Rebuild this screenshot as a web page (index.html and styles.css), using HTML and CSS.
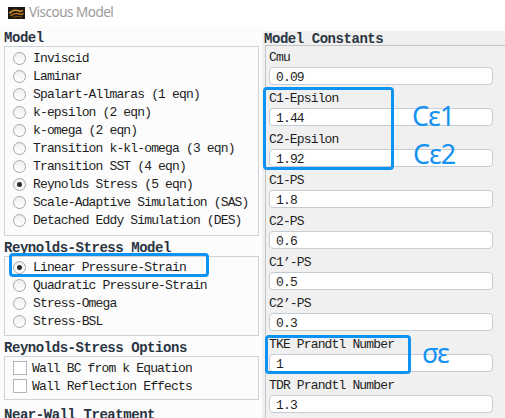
FILE: index.html
```html
<!DOCTYPE html>
<html>
<head>
<meta charset="utf-8" />
<title>Viscous Model</title>
<link rel="stylesheet" href="styles.css">
</head>
<body>

<div class="titlebar">
  <svg class="app-icon" width="17" height="12" viewBox="0 0 17 12">
    <rect width="17" height="12" fill="#1d1812"/>
    <path d="M1.5 6.5 C4 3, 8 2.5, 12 4.5 L15 3.5" stroke="#d4932a" stroke-width="1.6" fill="none"/>
    <path d="M2.5 9 C5 6.5, 9 6, 13 7.5 L15.5 6.5" stroke="#b8741c" stroke-width="1.4" fill="none"/>
    <path d="M5 10.5 C8 9, 11 9.5, 14 10" stroke="#8a5614" stroke-width="1" fill="none"/>
  </svg>
  <span class="title">Viscous Model</span>
</div>

<div class="main">
  <div class="left">
    <div class="heading">Model</div>
    <div class="group">
      <div class="opt"><span class="radio"></span>Inviscid</div>
      <div class="opt"><span class="radio"></span>Laminar</div>
      <div class="opt"><span class="radio"></span>Spalart-Allmaras (1 eqn)</div>
      <div class="opt"><span class="radio"></span>k-epsilon (2 eqn)</div>
      <div class="opt"><span class="radio"></span>k-omega (2 eqn)</div>
      <div class="opt"><span class="radio"></span>Transition k-kl-omega (3 eqn)</div>
      <div class="opt"><span class="radio"></span>Transition SST (4 eqn)</div>
      <div class="opt"><span class="radio on"></span>Reynolds Stress (5 eqn)</div>
      <div class="opt"><span class="radio"></span>Scale-Adaptive Simulation (SAS)</div>
      <div class="opt"><span class="radio"></span>Detached Eddy Simulation (DES)</div>
    </div>

    <div class="heading">Reynolds-Stress Model</div>
    <div class="group group-rs">
      <div class="opt"><span class="radio on"></span>Linear Pressure-Strain</div>
      <div class="opt"><span class="radio"></span>Quadratic Pressure-Strain</div>
      <div class="opt"><span class="radio"></span>Stress-Omega</div>
      <div class="opt"><span class="radio"></span>Stress-BSL</div>
    </div>

    <div class="heading">Reynolds-Stress Options</div>
    <div class="group group-check">
      <div class="opt"><span class="check"></span>Wall BC from k Equation</div>
      <div class="opt"><span class="check"></span>Wall Reflection Effects</div>
    </div>

    <div class="heading heading-last">Near-Wall Treatment</div>
  </div>

  <div class="right">
    <div class="heading heading-right">Model Constants</div>
    <div class="constants">
      <div class="field"><div class="label">Cmu</div><div class="input">0.09</div></div>
      <div class="field"><div class="label">C1-Epsilon</div><div class="input">1.44</div></div>
      <div class="field"><div class="label">C2-Epsilon</div><div class="input">1.92</div></div>
      <div class="field"><div class="label">C1-PS</div><div class="input">1.8</div></div>
      <div class="field"><div class="label">C2-PS</div><div class="input">0.6</div></div>
      <div class="field"><div class="label">C1&#8217;-PS</div><div class="input">0.5</div></div>
      <div class="field"><div class="label">C2&#8217;-PS</div><div class="input">0.3</div></div>
      <div class="field"><div class="label">TKE Prandtl Number</div><div class="input">1</div></div>
      <div class="field"><div class="label">TDR Prandtl Number</div><div class="input">1.3</div></div>
    </div>
  </div>
</div>

<!-- blue markers drawn over the form -->
<div class="mark mark-linear"></div>
<div class="mark mark-eps"></div>
<div class="mark mark-tke"></div>
<div class="note note-c1">C&#949;1</div>
<div class="note note-c2">C&#949;2</div>
<div class="note note-sigma">&#963;&#949;</div>

</body>
</html>
```

FILE: styles.css
```css
body {
  margin: 0;
  width: 505px;
  height: 418px;
  overflow: hidden;
  position: relative;
  background: #fcfcfc;
  font-family: "Liberation Mono", "DejaVu Sans Mono", monospace;
  font-size: 13px;
  letter-spacing: -0.85px;
  color: #1e1e1e;
}

/* window title */
.titlebar {
  height: 26px;
  display: flex;
  align-items: center;
  padding-left: 8px;
  background: #ffffff;
}
.app-icon {
  margin-top: -1px;
}
.title {
  margin-left: 4px;
  margin-top: -2px;
  font-family: "Noto Sans", sans-serif;
  font-size: 13.5px;
  letter-spacing: -0.5px;
  color: #9a9a9a;
}

.main {
  display: flex;
  align-items: flex-start;
}

/* left column with radio groups */
.left {
  width: 262px;
  padding-left: 4px;
  box-sizing: border-box;
}
.heading {
  height: 20px;
  padding-top: 4px;
  box-sizing: border-box;
  line-height: 16px;
  font-size: 14px;
  font-weight: bold;
  letter-spacing: -0.45px;
  color: #2a3442;
  white-space: nowrap;
}
.heading-last {
  margin-top: 3px;
}
.group {
  width: 255px;
  box-sizing: border-box;
  border: 1px solid #cdd3dc;
  background: #fcfcfc;
  padding: 2px 0 6px 8px;
}
.group-rs {
  padding-top: 1px;
  padding-bottom: 5px;
}
.group-check {
  padding-top: 2px;
  padding-bottom: 4px;
}
.opt {
  height: 18px;
  line-height: 20px;
  display: flex;
  align-items: flex-start;
  white-space: nowrap;
}
.radio {
  width: 13px;
  height: 13px;
  margin-top: 3px;
  box-sizing: border-box;
  border: 1px solid #a6a6a6;
  border-radius: 50%;
  background: linear-gradient(#efefef, #ffffff);
  margin-right: 7px;
  display: flex;
  align-items: center;
  justify-content: center;
}
.radio.on::after {
  content: "";
  width: 5px;
  height: 5px;
  border-radius: 50%;
  background: #2c2c2c;
}
.check {
  width: 14px;
  height: 14px;
  margin-top: 2px;
  box-sizing: border-box;
  border: 1px solid #b4b4b4;
  background: #ffffff;
  margin-right: 5px;
}

/* right column with constants */
.right {
  flex: 1;
  margin-top: 5px;
  height: 400px;
  background: #f0f0f0;
}
.heading-right {
  height: 14px;
  padding-top: 2px;
  line-height: 12px;
  padding-left: 2px;
}
.constants {
  margin-left: 3px;
  border-left: 1px solid #c4c4c4;
  border-top: 1px solid #c4c4c4;
  padding-left: 3px;
  height: 380px;
}
.field + .field {
  margin-top: 2px;
}
.label {
  height: 21px;
  line-height: 23px;
  white-space: nowrap;
}
.input {
  width: 224px;
  height: 18px;
  box-sizing: border-box;
  border: 1px solid #c5ccd6;
  border-radius: 4px;
  background: #ffffff;
  padding: 2px 0 0 6px;
  line-height: 15px;
}

/* blue markers */
.mark {
  position: absolute;
  border: 3px solid #0f93f2;
  border-radius: 4px;
  box-sizing: border-box;
}
.mark-linear {
  left: 9px;
  top: 253px;
  width: 200px;
  height: 24px;
}
.mark-eps {
  left: 263px;
  top: 87px;
  width: 131px;
  height: 83px;
}
.mark-tke {
  left: 265px;
  top: 335px;
  width: 146px;
  height: 39px;
}
.note {
  position: absolute;
  font-family: "Noto Sans", sans-serif;
  font-size: 27px;
  line-height: 30px;
  letter-spacing: -1px;
  color: #1592f2;
}
.note-c1 {
  left: 412px;
  top: 101px;
}
.note-c2 {
  left: 413px;
  top: 139px;
}
.note-sigma {
  left: 422px;
  top: 338px;
}
```
